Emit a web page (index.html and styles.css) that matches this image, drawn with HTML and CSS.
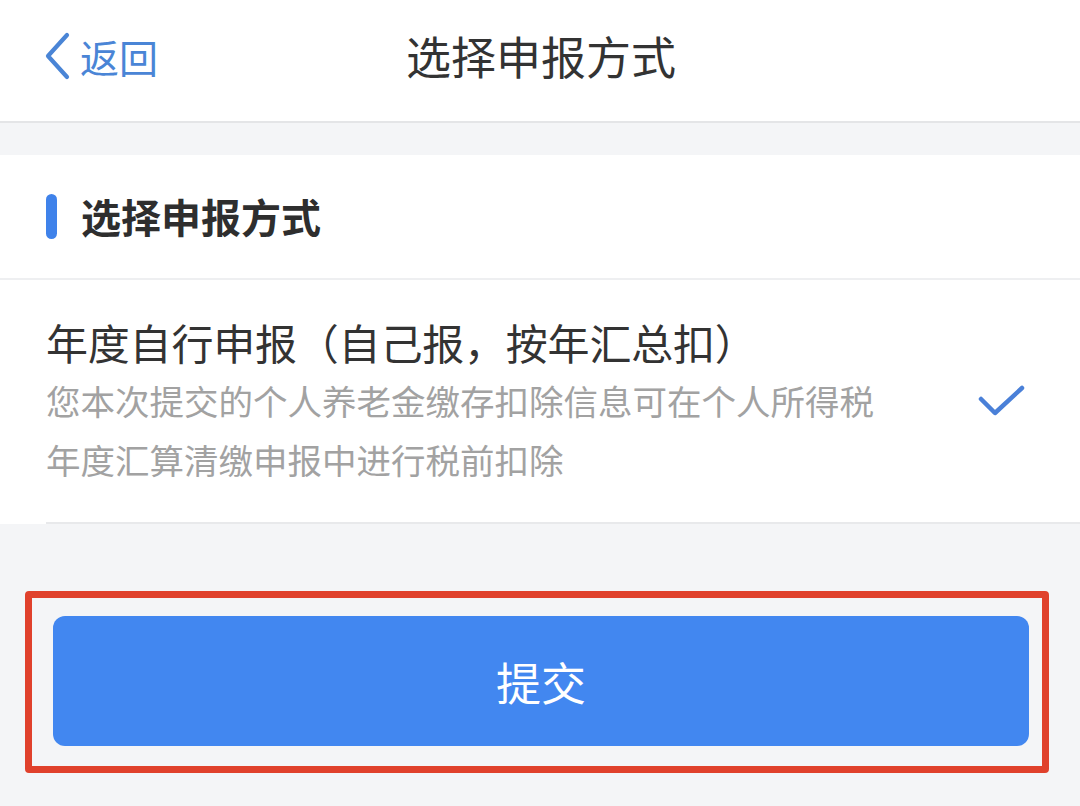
FILE: index.html
```html
<!DOCTYPE html>
<html lang="zh-CN">
<head>
<meta charset="utf-8">
<title>选择申报方式</title>
<link rel="stylesheet" href="styles.css">
</head>
<body>
<header class="nav">
  <div class="back">
    <svg class="chev" width="30" height="48" viewBox="0 0 30 48"><path d="M25 3 L6 24 L25 45" fill="none" stroke="#4a85d6" stroke-width="4.2" stroke-linecap="round" stroke-linejoin="round"/></svg>
    <span class="back-text">返回</span>
  </div>
  <div class="nav-title">选择申报方式</div>
</header>
<section class="card">
  <div class="card-head">
    <span class="bar"></span>
    <span class="head-title">选择申报方式</span>
  </div>
  <div class="option">
    <div class="opt-text">
      <div class="opt-title">年度自行申报（自己报，按年汇总扣）</div>
      <div class="opt-desc">您本次提交的个人养老金缴存扣除信息可在个人所得税<br>年度汇算清缴申报中进行税前扣除</div>
    </div>
    <svg class="check" width="48" height="34" viewBox="0 0 48 34"><path d="M3 14 L17 28 L44 3" fill="none" stroke="#4a80d8" stroke-width="4.5" stroke-linecap="round" stroke-linejoin="round"/></svg>
  </div>
</section>
<div class="highlight">
  <button class="submit">提交</button>
</div>
</body>
</html>
```
FILE: styles.css
```css
* { box-sizing: border-box; }
html, body {
  margin: 0;
  padding: 0;
  background: #f4f5f7;
  font-family: "Noto Sans CJK SC", "Noto Sans", sans-serif;
  width: 1080px;
  height: 806px;
  overflow: hidden;
}
.nav {
  height: 123px;
  background: #fff;
  border-bottom: 2px solid #e4e5e7;
  display: flex;
  align-items: center;
  justify-content: center;
  position: relative;
}
.back {
  position: absolute;
  left: 42px;
  top: 32px;
  display: flex;
  align-items: center;
  gap: 8px;
}
.chev { display: block; }
.back-text {
  font-size: 39px;
  color: #4a85d6;
  line-height: 48px;
}
.nav-title {
  font-size: 45px;
  color: #333;
  line-height: 60px;
  margin-top: -10px;
  padding-left: 2px;
}
.card {
  margin-top: 32px;
  background: #fff;
}
.card-head {
  height: 125px;
  border-bottom: 2px solid #eeeff1;
  display: flex;
  align-items: center;
  padding-left: 46px;
}
.bar {
  width: 11px;
  height: 45px;
  border-radius: 6px;
  background: #3f82ea;
  margin-right: 24px;
}
.head-title {
  font-size: 40px;
  font-weight: 700;
  color: #2e2e2e;
  line-height: 50px;
  margin-top: -2px;
}
.option {
  margin-left: 46px;
  height: 244px;
  border-bottom: 2px solid #e8e9eb;
  display: flex;
  align-items: flex-start;
  padding-top: 36px;
  padding-right: 54px;
}
.opt-text { flex: 1; }
.opt-title {
  font-size: 42px;
  color: #333;
  line-height: 52px;
  letter-spacing: -0.2px;
}
.opt-desc {
  font-size: 34.5px;
  color: #a2a2a2;
  line-height: 59px;
  margin-top: 3px;
}
.check {
  margin-top: 69px;
}
.highlight {
  margin: 67px 0 0 25px;
  width: 1024px;
  height: 182px;
  border: 7px solid #e0412c;
  border-radius: 4px;
  padding: 18px 12px 0 21px;
}
.submit {
  display: block;
  width: 976px;
  height: 130px;
  border: none;
  border-radius: 12px;
  background: #4287f0;
  color: #fff;
  font-family: "Noto Sans CJK SC", "Noto Sans", sans-serif;
  font-size: 45px;
  padding: 0;
}
```
